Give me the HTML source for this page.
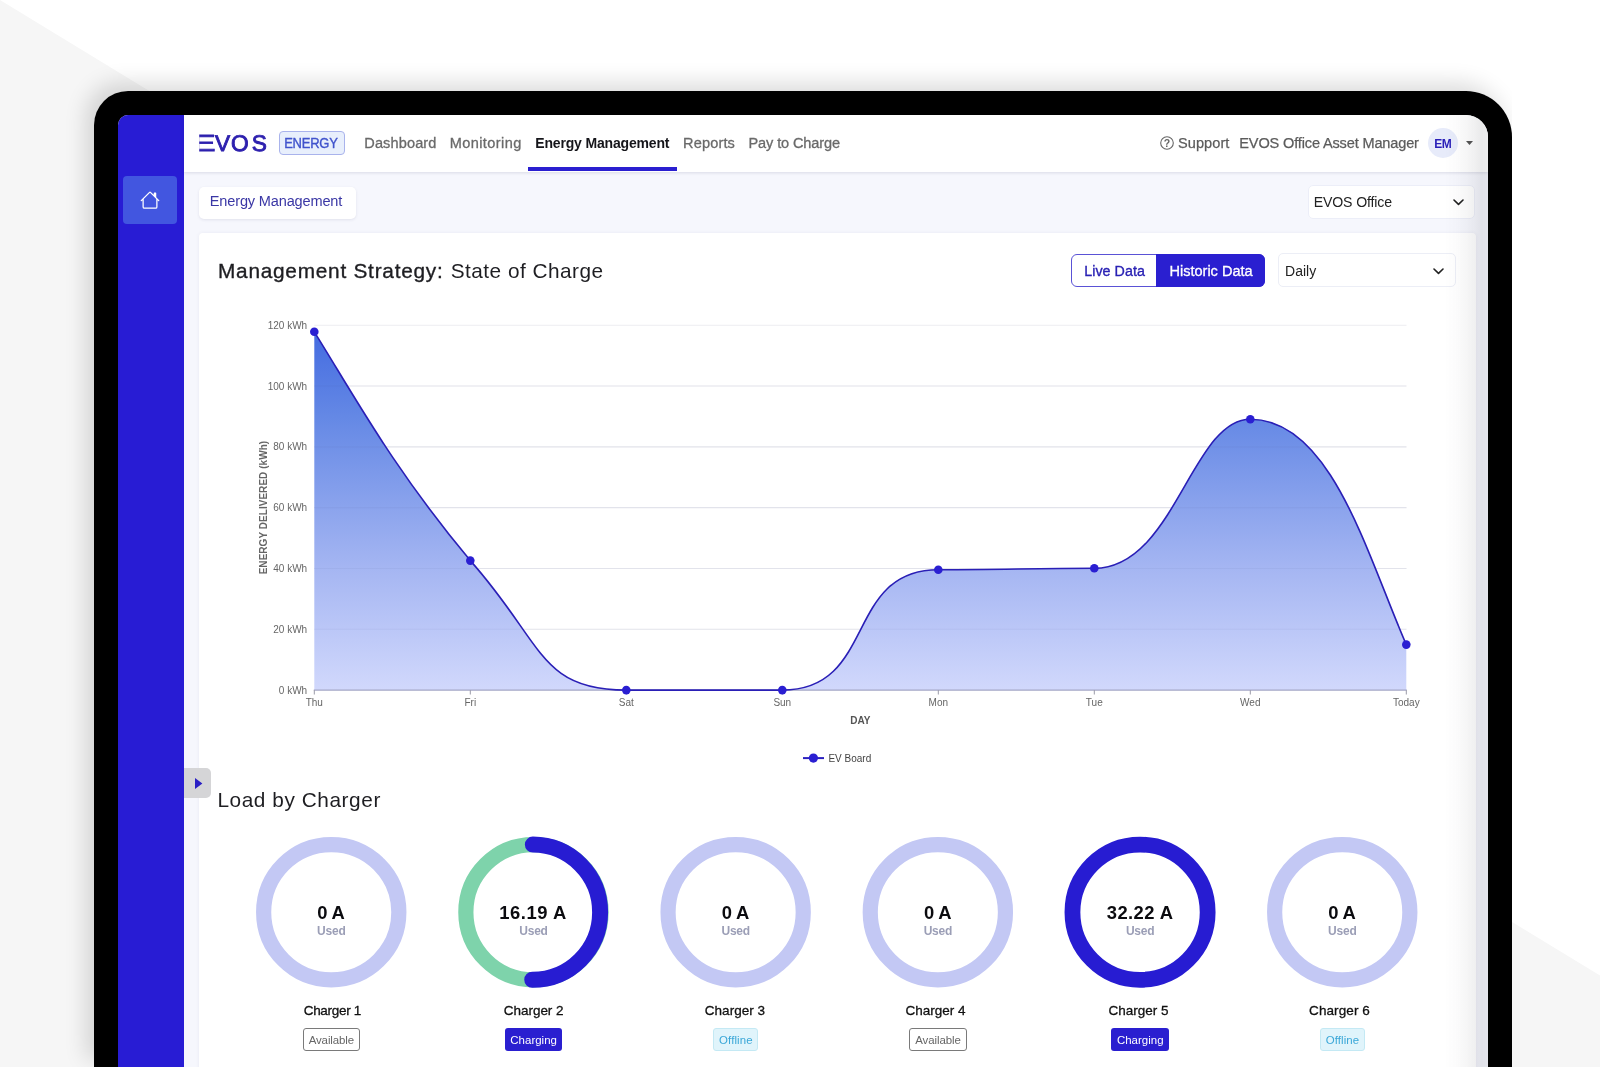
<!DOCTYPE html>
<html lang="en"><head><meta charset="utf-8"><title>EVOS Energy - Energy Management</title>
<style>
html,body{margin:0;padding:0;width:1600px;height:1067px;overflow:hidden;}
body{width:1600px;height:1067px;overflow:hidden;position:relative;background:#fff;font-family:"Liberation Sans",sans-serif;-webkit-font-smoothing:antialiased;}
span{display:block;}
</style></head>
<body>
<div style="position:absolute;left:0;top:0;width:1600px;height:1067px;overflow:hidden;">
<svg style="position:absolute;left:0;top:0" width="1600" height="1067" viewBox="0 0 1600 1067"><polygon points="0,0 1600,975.5 1600,1067 0,1067" fill="#f6f6f6"/></svg>
<div style="position:absolute;left:94px;top:91px;width:1418px;height:976px;border-radius:34px 46px 0 0;box-shadow:-8px -8px 22px rgba(0,0,0,.14);clip-path:inset(-70px 0 0 -70px);"></div><div style="position:absolute;left:94px;top:91px;width:1418px;height:976px;background:#000;border-radius:34px 46px 0 0;"></div><div id="screen" style="position:absolute;left:118px;top:115px;width:1370px;height:952px;background:#f6f7fd;border-radius:10px 22px 0 0;overflow:hidden;">
<div style="position:absolute;left:-118px;top:-115px;width:1600px;height:1067px;will-change:transform;">
<div style="position:absolute;left:118px;top:115px;width:66px;height:1000px;background:#281cd4;"></div><div style="position:absolute;left:123px;top:176px;width:54px;height:48px;background:#4256e0;border-radius:4px;"></div><svg style="position:absolute;left:140.3px;top:189.6px" width="20" height="20" viewBox="0 0 16 16"><path fill="#fff" d="M8.707 1.5a1 1 0 0 0-1.414 0L.646 8.146a.5.5 0 0 0 .708.708L2 8.207V13.5A1.5 1.5 0 0 0 3.5 15h9a1.5 1.5 0 0 0 1.5-1.5V8.207l.646.647a.5.5 0 0 0 .708-.708L13 5.793V2.5a.5.5 0 0 0-.5-.5h-1a.5.5 0 0 0-.5.5v1.293zM13 7.207V13.5a.5.5 0 0 1-.5.5h-9a.5.5 0 0 1-.5-.5V7.207l5-5z"/></svg>
<div style="position:absolute;left:198.5px;top:186.5px;width:157px;height:32px;background:#fff;border-radius:5px;box-shadow:0 1px 3px rgba(40,40,90,.10);"></div><span style="position:absolute;top:191.45px;line-height:20px;white-space:nowrap;font-size:14.56px;font-weight:400;color:#3a37a5;letter-spacing:-0.156px;left:209.80px;">Energy Management</span><div style="position:absolute;left:1308px;top:185px;width:167px;height:33.5px;box-sizing:border-box;background:#fff;border:1px solid #eceef8;border-radius:5px;"></div><span style="position:absolute;top:191.80px;line-height:20px;white-space:nowrap;font-size:14.14px;font-weight:400;color:#222;letter-spacing:-0.146px;left:1313.70px;">EVOS Office</span><svg style="position:absolute;left:1453.2px;top:199px" width="11" height="7" viewBox="0 0 11 7"><path d="M1 1 L5.5 5.4 L10 1" fill="none" stroke="#222" stroke-width="1.6" stroke-linecap="round" stroke-linejoin="round"/></svg><div style="position:absolute;left:198.5px;top:233px;width:1277.5px;height:900px;background:#fff;border-radius:4px 4px 0 0;box-shadow:0 0 4px rgba(40,40,90,.06);"></div><span style="position:absolute;top:260.59px;line-height:20px;white-space:nowrap;font-size:20.8px;font-weight:400;color:#1e1e22;letter-spacing:0.757px;-webkit-text-stroke:0.35px #1e1e22;left:218.00px;">Management Strategy:</span><span style="position:absolute;top:260.59px;line-height:20px;white-space:nowrap;font-size:20.8px;font-weight:400;color:#1e1e22;letter-spacing:0.478px;left:450.70px;">State of Charge</span><div style="position:absolute;left:1071px;top:253.7px;width:193.5px;height:33.6px;box-sizing:border-box;border:1px solid #5a52d6;border-radius:6px;background:#fff;"></div><div style="position:absolute;left:1156px;top:253.7px;width:108.5px;height:33.6px;background:#2a1fd0;border-radius:0 6px 6px 0;"></div><span style="position:absolute;top:260.75px;line-height:20px;white-space:nowrap;font-size:14.28px;font-weight:400;color:#2a22b4;letter-spacing:0.046px;-webkit-text-stroke:0.35px #2a22b4;left:1084.20px;">Live Data</span><span style="position:absolute;top:260.65px;line-height:20px;white-space:nowrap;font-size:14.56px;font-weight:400;color:#fff;letter-spacing:-0.014px;-webkit-text-stroke:0.3px #fff;left:1169.50px;">Historic Data</span><div style="position:absolute;left:1278.3px;top:253.2px;width:177.5px;height:34px;box-sizing:border-box;background:#fff;border:1px solid #eceef6;border-radius:5px;"></div><span style="position:absolute;top:260.85px;line-height:20px;white-space:nowrap;font-size:14px;font-weight:400;color:#222;letter-spacing:0.021px;left:1285.00px;">Daily</span><svg style="position:absolute;left:1433.3px;top:267.6px" width="11" height="7" viewBox="0 0 11 7"><path d="M1 1 L5.5 5.4 L10 1" fill="none" stroke="#222" stroke-width="1.6" stroke-linecap="round" stroke-linejoin="round"/></svg>
<svg style="position:absolute;left:0;top:0" width="1600" height="1067" viewBox="0 0 1600 1067" font-family="Liberation Sans, sans-serif"><defs><linearGradient id="ag" gradientUnits="userSpaceOnUse" x1="0" y1="325" x2="0" y2="690"><stop offset="0" stop-color="#4169e0"/><stop offset="0.25" stop-color="#6488e5"/><stop offset="0.66" stop-color="#a4b5f2"/><stop offset="1" stop-color="#d1d8fc"/></linearGradient></defs><line x1="314.3" y1="325.20" x2="1406.5" y2="325.20" stroke="#ededf1" stroke-width="1.1"/><text x="307.2" y="328.80" text-anchor="end" font-size="10" fill="#666">120 kWh</text><line x1="314.3" y1="386.02" x2="1406.5" y2="386.02" stroke="#ededf1" stroke-width="1.1"/><text x="307.2" y="389.62" text-anchor="end" font-size="10" fill="#666">100 kWh</text><line x1="314.3" y1="446.83" x2="1406.5" y2="446.83" stroke="#ededf1" stroke-width="1.1"/><text x="307.2" y="450.43" text-anchor="end" font-size="10" fill="#666">80 kWh</text><line x1="314.3" y1="507.65" x2="1406.5" y2="507.65" stroke="#ededf1" stroke-width="1.1"/><text x="307.2" y="511.25" text-anchor="end" font-size="10" fill="#666">60 kWh</text><line x1="314.3" y1="568.47" x2="1406.5" y2="568.47" stroke="#ededf1" stroke-width="1.1"/><text x="307.2" y="572.07" text-anchor="end" font-size="10" fill="#666">40 kWh</text><line x1="314.3" y1="629.28" x2="1406.5" y2="629.28" stroke="#ededf1" stroke-width="1.1"/><text x="307.2" y="632.88" text-anchor="end" font-size="10" fill="#666">20 kWh</text><text x="307.2" y="693.70" text-anchor="end" font-size="10" fill="#666">0 kWh</text><path d="M314.30 331.80 C354.3 395.8 392.3 467.0 470.30 560.60 C543.8 643.1 538.8 690.1 626.30 690.10 C678.3 690.1 730.3 690.1 782.30 690.10 C876.9 690.1 844.1 569.8 938.30 569.75 C998.3 569.8 1034.3 568.3 1094.30 568.30 C1174.4 568.3 1191.5 419.2 1250.30 419.20 C1331.2 419.2 1367.1 555.1 1406.30 644.60 L1406.30 690.1 L314.30 690.1 Z" fill="url(#ag)"/><line x1="314.3" y1="386.02" x2="1406.5" y2="386.02" stroke="#5060a0" stroke-opacity=".07" stroke-width="1.1"/><line x1="314.3" y1="446.83" x2="1406.5" y2="446.83" stroke="#5060a0" stroke-opacity=".07" stroke-width="1.1"/><line x1="314.3" y1="507.65" x2="1406.5" y2="507.65" stroke="#5060a0" stroke-opacity=".07" stroke-width="1.1"/><line x1="314.3" y1="568.47" x2="1406.5" y2="568.47" stroke="#5060a0" stroke-opacity=".07" stroke-width="1.1"/><line x1="314.3" y1="629.28" x2="1406.5" y2="629.28" stroke="#5060a0" stroke-opacity=".07" stroke-width="1.1"/><line x1="313.8" y1="690.1" x2="1406.8" y2="690.1" stroke="#a3a6c6" stroke-width="1.2"/><line x1="314.30" y1="690.1" x2="314.30" y2="694.5" stroke="#9a9aa8" stroke-width="1"/><text x="314.30" y="705.5" text-anchor="middle" font-size="10" fill="#666">Thu</text><line x1="470.30" y1="690.1" x2="470.30" y2="694.5" stroke="#9a9aa8" stroke-width="1"/><text x="470.30" y="705.5" text-anchor="middle" font-size="10" fill="#666">Fri</text><line x1="626.30" y1="690.1" x2="626.30" y2="694.5" stroke="#9a9aa8" stroke-width="1"/><text x="626.30" y="705.5" text-anchor="middle" font-size="10" fill="#666">Sat</text><line x1="782.30" y1="690.1" x2="782.30" y2="694.5" stroke="#9a9aa8" stroke-width="1"/><text x="782.30" y="705.5" text-anchor="middle" font-size="10" fill="#666">Sun</text><line x1="938.30" y1="690.1" x2="938.30" y2="694.5" stroke="#9a9aa8" stroke-width="1"/><text x="938.30" y="705.5" text-anchor="middle" font-size="10" fill="#666">Mon</text><line x1="1094.30" y1="690.1" x2="1094.30" y2="694.5" stroke="#9a9aa8" stroke-width="1"/><text x="1094.30" y="705.5" text-anchor="middle" font-size="10" fill="#666">Tue</text><line x1="1250.30" y1="690.1" x2="1250.30" y2="694.5" stroke="#9a9aa8" stroke-width="1"/><text x="1250.30" y="705.5" text-anchor="middle" font-size="10" fill="#666">Wed</text><line x1="1406.30" y1="690.1" x2="1406.30" y2="694.5" stroke="#9a9aa8" stroke-width="1"/><text x="1406.30" y="705.5" text-anchor="middle" font-size="10" fill="#666">Today</text><path d="M314.30 331.80 C354.3 395.8 392.3 467.0 470.30 560.60 C543.8 643.1 538.8 690.1 626.30 690.10 C678.3 690.1 730.3 690.1 782.30 690.10 C876.9 690.1 844.1 569.8 938.30 569.75 C998.3 569.8 1034.3 568.3 1094.30 568.30 C1174.4 568.3 1191.5 419.2 1250.30 419.20 C1331.2 419.2 1367.1 555.1 1406.30 644.60" fill="none" stroke="#2a1fb6" stroke-width="1.6"/><circle cx="314.30" cy="331.80" r="4.3" fill="#2a1fd2"/><circle cx="470.30" cy="560.60" r="4.3" fill="#2a1fd2"/><circle cx="626.30" cy="690.10" r="4.3" fill="#2a1fd2"/><circle cx="782.30" cy="690.10" r="4.3" fill="#2a1fd2"/><circle cx="938.30" cy="569.75" r="4.3" fill="#2a1fd2"/><circle cx="1094.30" cy="568.30" r="4.3" fill="#2a1fd2"/><circle cx="1250.30" cy="419.20" r="4.3" fill="#2a1fd2"/><circle cx="1406.30" cy="644.60" r="4.3" fill="#2a1fd2"/><text x="860.3" y="724.3" text-anchor="middle" font-size="10" font-weight="700" fill="#555">DAY</text><text transform="translate(266.9 507.6) rotate(-90)" text-anchor="middle" font-size="10" font-weight="700" fill="#666" textLength="133.5" lengthAdjust="spacing">ENERGY DELIVERED (kWh)</text><line x1="803" y1="758.1" x2="824" y2="758.1" stroke="#2b20bf" stroke-width="2"/><circle cx="813.4" cy="758.1" r="4.6" fill="#2a1fd2"/><text x="828.4" y="761.8" font-size="10" fill="#444">EV Board</text></svg>
<svg style="position:absolute;left:0;top:0" width="1600" height="1067" viewBox="0 0 1600 1067"><circle cx="331.25" cy="912.2" r="67.6" fill="none" stroke="#c3c8f4" stroke-width="15.2"/><circle cx="533.45" cy="912.2" r="67.6" fill="none" stroke="#7ed3ab" stroke-width="15.2"/><path d="M532.85 844.60 A67.6 67.6 0 0 1 532.25 979.80" fill="none" stroke="#271cd2" stroke-width="16.0" stroke-linecap="round"/><circle cx="735.65" cy="912.2" r="67.6" fill="none" stroke="#c3c8f4" stroke-width="15.2"/><circle cx="937.85" cy="912.2" r="67.6" fill="none" stroke="#c3c8f4" stroke-width="15.2"/><circle cx="1140.05" cy="912.2" r="67.6" fill="none" stroke="#271cd2" stroke-width="15.799999999999999"/><circle cx="1342.25" cy="912.2" r="67.6" fill="none" stroke="#c3c8f4" stroke-width="15.2"/></svg><span style="position:absolute;top:789.69px;line-height:20px;white-space:nowrap;font-size:20.8px;font-weight:400;color:#1e1e22;letter-spacing:0.572px;left:217.40px;">Load by Charger</span><span style="position:absolute;top:902.72px;line-height:20px;white-space:nowrap;font-size:18.4px;font-weight:700;color:#0b0b0f;letter-spacing:-0.169px;left:331.01px;transform:translateX(-50%);">0 A</span><span style="position:absolute;top:921.14px;line-height:20px;white-space:nowrap;font-size:12px;font-weight:700;color:#9b9eb6;letter-spacing:-0.238px;left:331.30px;transform:translateX(-50%);">Used</span><span style="position:absolute;top:1001.32px;line-height:20px;white-space:nowrap;font-size:13.5px;font-weight:400;color:#111;letter-spacing:-0.303px;-webkit-text-stroke:0.3px #111;left:332.35px;transform:translateX(-50%);">Charger 1</span><div style="position:absolute;left:302.55px;top:1028.3px;width:57.4px;height:22.5px;box-sizing:border-box;border:1px solid #7a7a7a;border-radius:3px;background:#fff;"></div><span style="position:absolute;top:1029.79px;line-height:20px;white-space:nowrap;font-size:11.44px;font-weight:400;color:#666;letter-spacing:-0.081px;left:331.39px;transform:translateX(-50%);">Available</span><span style="position:absolute;top:902.72px;line-height:20px;white-space:nowrap;font-size:18.4px;font-weight:700;color:#0b0b0f;letter-spacing:0.528px;left:533.06px;transform:translateX(-50%);">16.19 A</span><span style="position:absolute;top:921.14px;line-height:20px;white-space:nowrap;font-size:12px;font-weight:700;color:#9b9eb6;letter-spacing:-0.238px;left:533.50px;transform:translateX(-50%);">Used</span><span style="position:absolute;top:1001.32px;line-height:20px;white-space:nowrap;font-size:13.5px;font-weight:400;color:#111;letter-spacing:-0.015px;-webkit-text-stroke:0.3px #111;left:533.65px;transform:translateX(-50%);">Charger 2</span><div style="position:absolute;left:504.75px;top:1028.3px;width:57.4px;height:22.5px;border-radius:3px;background:#2a1fd0;"></div><span style="position:absolute;top:1029.79px;line-height:20px;white-space:nowrap;font-size:11.44px;font-weight:400;color:#fff;letter-spacing:0.035px;left:533.65px;transform:translateX(-50%);">Charging</span><span style="position:absolute;top:902.72px;line-height:20px;white-space:nowrap;font-size:18.4px;font-weight:700;color:#0b0b0f;letter-spacing:-0.169px;left:735.41px;transform:translateX(-50%);">0 A</span><span style="position:absolute;top:921.14px;line-height:20px;white-space:nowrap;font-size:12px;font-weight:700;color:#9b9eb6;letter-spacing:-0.238px;left:735.70px;transform:translateX(-50%);">Used</span><span style="position:absolute;top:1001.32px;line-height:20px;white-space:nowrap;font-size:13.5px;font-weight:400;color:#111;letter-spacing:0.041px;-webkit-text-stroke:0.3px #111;left:734.97px;transform:translateX(-50%);">Charger 3</span><div style="position:absolute;left:713.0px;top:1028.3px;width:45.3px;height:22.5px;box-sizing:border-box;border:1px solid #c4e9f4;border-radius:3px;background:#e0f4fb;"></div><span style="position:absolute;top:1029.79px;line-height:20px;white-space:nowrap;font-size:11.44px;font-weight:400;color:#3aa7d8;letter-spacing:0.102px;left:735.88px;transform:translateX(-50%);">Offline</span><span style="position:absolute;top:902.72px;line-height:20px;white-space:nowrap;font-size:18.4px;font-weight:700;color:#0b0b0f;letter-spacing:-0.169px;left:937.61px;transform:translateX(-50%);">0 A</span><span style="position:absolute;top:921.14px;line-height:20px;white-space:nowrap;font-size:12px;font-weight:700;color:#9b9eb6;letter-spacing:-0.238px;left:937.90px;transform:translateX(-50%);">Used</span><span style="position:absolute;top:1001.32px;line-height:20px;white-space:nowrap;font-size:13.5px;font-weight:400;color:#111;letter-spacing:-0.003px;-webkit-text-stroke:0.3px #111;left:935.55px;transform:translateX(-50%);">Charger 4</span><div style="position:absolute;left:909.15px;top:1028.3px;width:57.4px;height:22.5px;box-sizing:border-box;border:1px solid #7a7a7a;border-radius:3px;background:#fff;"></div><span style="position:absolute;top:1029.79px;line-height:20px;white-space:nowrap;font-size:11.44px;font-weight:400;color:#666;letter-spacing:-0.081px;left:937.99px;transform:translateX(-50%);">Available</span><span style="position:absolute;top:902.72px;line-height:20px;white-space:nowrap;font-size:18.4px;font-weight:700;color:#0b0b0f;letter-spacing:0.395px;left:1140.09px;transform:translateX(-50%);">32.22 A</span><span style="position:absolute;top:921.14px;line-height:20px;white-space:nowrap;font-size:12px;font-weight:700;color:#9b9eb6;letter-spacing:-0.238px;left:1140.10px;transform:translateX(-50%);">Used</span><span style="position:absolute;top:1001.32px;line-height:20px;white-space:nowrap;font-size:13.5px;font-weight:400;color:#111;letter-spacing:-0.003px;-webkit-text-stroke:0.3px #111;left:1138.50px;transform:translateX(-50%);">Charger 5</span><div style="position:absolute;left:1111.35px;top:1028.3px;width:57.4px;height:22.5px;border-radius:3px;background:#2a1fd0;"></div><span style="position:absolute;top:1029.79px;line-height:20px;white-space:nowrap;font-size:11.44px;font-weight:400;color:#fff;letter-spacing:0.035px;left:1140.25px;transform:translateX(-50%);">Charging</span><span style="position:absolute;top:902.72px;line-height:20px;white-space:nowrap;font-size:18.4px;font-weight:700;color:#0b0b0f;letter-spacing:-0.169px;left:1342.01px;transform:translateX(-50%);">0 A</span><span style="position:absolute;top:921.14px;line-height:20px;white-space:nowrap;font-size:12px;font-weight:700;color:#9b9eb6;letter-spacing:-0.238px;left:1342.30px;transform:translateX(-50%);">Used</span><span style="position:absolute;top:1001.32px;line-height:20px;white-space:nowrap;font-size:13.5px;font-weight:400;color:#111;letter-spacing:0.085px;-webkit-text-stroke:0.3px #111;left:1339.50px;transform:translateX(-50%);">Charger 6</span><div style="position:absolute;left:1319.6px;top:1028.3px;width:45.3px;height:22.5px;box-sizing:border-box;border:1px solid #c4e9f4;border-radius:3px;background:#e0f4fb;"></div><span style="position:absolute;top:1029.79px;line-height:20px;white-space:nowrap;font-size:11.44px;font-weight:400;color:#3aa7d8;letter-spacing:0.102px;left:1342.48px;transform:translateX(-50%);">Offline</span>
<div style="position:absolute;left:184px;top:767.5px;width:27px;height:30px;background:#d5d5d7;border-radius:0 5px 5px 0;"></div><svg style="position:absolute;left:194.6px;top:777.8px" width="8" height="11" viewBox="0 0 8 11"><path d="M0 0 L7.4 5.5 L0 11 Z" fill="#2a1fc4"/></svg>
<div style="position:absolute;left:184px;top:115px;width:1304px;height:56.5px;background:#fff;box-shadow:0 1px 3px rgba(30,30,80,.13);"></div><svg style="position:absolute;left:190px;top:125px" width="90" height="36" viewBox="190 125 90 36" font-family="Liberation Sans, sans-serif" font-size="23" fill="#2d20ae" stroke="#2d20ae" text-rendering="geometricPrecision"><text y="151.0" font-size="22.7" stroke-width="0.9"><tspan x="192.4" font-size="23.3" stroke-width="0.8" textLength="23.15" lengthAdjust="spacingAndGlyphs">E</tspan><tspan x="215.1 230.9 251.8">VOS</tspan></text><rect x="190" y="130" width="9.2" height="26" fill="#fff" stroke="none"/></svg><div style="position:absolute;left:279px;top:131px;width:66px;height:23.6px;box-sizing:border-box;background:#e8effc;border:1px solid #a9b3ec;border-radius:4px;"></div><span style="position:absolute;top:133.50px;line-height:20px;white-space:nowrap;font-size:13px;font-weight:400;color:#4053cc;letter-spacing:-0.246px;-webkit-text-stroke:0.35px #4053cc;transform:scaleY(1.09);transform-origin:0 14.50px;left:284.20px;">ENERGY</span><span style="position:absolute;top:133.15px;line-height:20px;white-space:nowrap;font-size:14.56px;font-weight:400;color:#6a6a6a;letter-spacing:0.116px;-webkit-text-stroke:0.3px #6a6a6a;left:364.30px;">Dashboard</span><span style="position:absolute;top:133.15px;line-height:20px;white-space:nowrap;font-size:14.56px;font-weight:400;color:#6a6a6a;letter-spacing:0.408px;-webkit-text-stroke:0.3px #6a6a6a;left:449.70px;">Monitoring</span><span style="position:absolute;top:133.35px;line-height:20px;white-space:nowrap;font-size:14px;font-weight:700;color:#15151a;letter-spacing:-0.173px;left:535.30px;">Energy Management</span><span style="position:absolute;top:133.15px;line-height:20px;white-space:nowrap;font-size:14.56px;font-weight:400;color:#6a6a6a;letter-spacing:0.156px;-webkit-text-stroke:0.3px #6a6a6a;left:683.00px;">Reports</span><span style="position:absolute;top:133.15px;line-height:20px;white-space:nowrap;font-size:14.56px;font-weight:400;color:#6a6a6a;letter-spacing:-0.117px;-webkit-text-stroke:0.3px #6a6a6a;left:748.50px;">Pay to Charge</span><div style="position:absolute;left:528px;top:167px;width:149px;height:4.3px;background:#2a1fd0;"></div><svg style="position:absolute;left:1159px;top:135.4px" width="16" height="16" viewBox="0 0 16 16"><circle cx="8" cy="8" r="6.3" fill="none" stroke="#666" stroke-width="1.1"/><text x="8" y="11.7" text-anchor="middle" font-family="Liberation Sans, sans-serif" font-size="10.5" font-weight="700" fill="#666">?</text></svg><span style="position:absolute;top:133.15px;line-height:20px;white-space:nowrap;font-size:14.56px;font-weight:400;color:#5c5c5c;letter-spacing:0.065px;-webkit-text-stroke:0.25px #5c5c5c;left:1178.00px;">Support</span><span style="position:absolute;top:133.15px;line-height:20px;white-space:nowrap;font-size:14.56px;font-weight:400;color:#5c5c5c;letter-spacing:-0.151px;-webkit-text-stroke:0.25px #5c5c5c;left:1239.30px;">EVOS Office Asset Manager</span><div style="position:absolute;left:1428px;top:128px;width:30px;height:30px;background:#e7ebfa;border-radius:50%;"></div><span style="position:absolute;top:133.64px;line-height:20px;white-space:nowrap;font-size:12px;font-weight:700;color:#2a1fb8;letter-spacing:-0.604px;left:1434.30px;">EM</span><svg style="position:absolute;left:1466px;top:141.2px" width="7" height="4" viewBox="0 0 7 4"><path d="M0 0 H7 L3.5 4 Z" fill="#555"/></svg>
</div>
<div style="position:absolute;left:1326px;top:0;width:44px;height:1000px;background:linear-gradient(90deg,rgba(8,10,20,0) 0,rgba(8,10,20,.012) 25%,rgba(8,10,20,.035) 50%,rgba(8,10,20,.062) 72%,rgba(8,10,20,.085) 86%,rgba(8,10,20,.075) 100%);"></div></div>
</div>
</body></html>
